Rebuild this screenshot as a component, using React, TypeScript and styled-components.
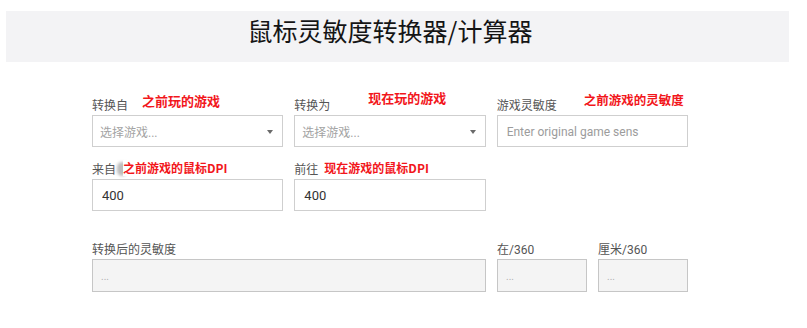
import React from 'react';
import styled, { createGlobalStyle } from 'styled-components';

const GlobalStyle = createGlobalStyle`
  html, body {
    margin: 0;
    padding: 0;
    background: #fff;
  }
  body {
    font-family: Roboto, "Noto Sans CJK SC", sans-serif;
    color: #333;
  }
  * {
    box-sizing: border-box;
  }
`;

const Page = styled.div`
  width: 807px;
  height: 328px;
  overflow: hidden;
`;

const Banner = styled.header`
  margin: 11px 18px 0 6px;
  height: 51px;
  background: #f3f3f5;
  padding: 4px 15px 0 0;
`;

const Title = styled.h1`
  margin: 0;
  font-family: "Noto Sans CJK SC", sans-serif;
  font-size: 25px;
  font-weight: 400;
  line-height: 30px;
  color: #151515;
  text-align: center;
`;

const Form = styled.form`
  margin: 35px 0 0 92px;
  width: 596px;
`;

const Grid = styled.div`
  display: grid;
  grid-template-columns: repeat(3, minmax(0, 1fr));
  column-gap: 11px;
  row-gap: 14px;
`;

const Results = styled.div`
  display: grid;
  grid-template-columns: 394px minmax(0, 1fr) minmax(0, 1fr);
  column-gap: 11px;
  margin-top: 30px;
`;

const Field = styled.div`
  position: relative;
`;

const Label = styled.label`
  display: block;
  height: 18px;
  font-family: Roboto, "Noto Sans CJK SC", sans-serif;
  font-size: 12px;
  line-height: 18px;
  color: #555;
`;

// red hand-written annotations laid over the labels
const Note = styled.span<{ $x: number; $y: number; $size?: number }>`
  position: absolute;
  left: ${(p) => p.$x}px;
  top: ${(p) => p.$y}px;
  padding-right: 2px;
  background: #fff;
  font-family: "Noto Sans CJK SC", sans-serif;
  font-size: ${(p) => p.$size ?? 13}px;
  font-weight: 700;
  line-height: 16px;
  color: #f2161b;
  white-space: nowrap;
`;

const Smudge = styled.span`
  position: absolute;
  left: 25px;
  top: 1px;
  width: 10px;
  height: 14px;
  border-radius: 7px;
  background: #bdbdbd;
  filter: blur(1.5px);
`;

const SelectBox = styled.div`
  display: flex;
  align-items: center;
  justify-content: space-between;
  height: 32px;
  padding: 0 9px 0 7px;
  border: 1px solid #cfcfcf;
  background: #fff;
  cursor: pointer;
`;

const Placeholder = styled.span`
  font-family: Roboto, "Noto Sans CJK SC", sans-serif;
  font-size: 12px;
  color: #a3a3a3;
`;

const Caret = styled.span`
  width: 0;
  height: 0;
  margin-top: 2px;
  border-left: 3px solid transparent;
  border-right: 3px solid transparent;
  border-top: 4px solid #6a6a6a;
`;

const Input = styled.input<{ $result?: boolean }>`
  display: block;
  width: 100%;
  height: ${(p) => (p.$result ? 33 : 32)}px;
  padding: 0 ${(p) => (p.$result ? 8 : 9)}px;
  border: ${(p) => (p.$result ? '1.5px solid #c6c6c6' : '1px solid #cfcfcf')};
  background: ${(p) => (p.$result ? '#f4f4f4' : '#fff')};
  font-family: Roboto, "Noto Sans CJK SC", sans-serif;
  font-size: 13px;
  color: #333;
  outline: none;

  &::placeholder {
    color: ${(p) => (p.$result ? '#b0b0b0' : '#9c9c9c')};
    font-size: ${(p) => (p.$result ? 10 : 12)}px;
  }
`;

const GameSelect: React.FC = () => (
  <SelectBox>
    <Placeholder>选择游戏...</Placeholder>
    <Caret />
  </SelectBox>
);

export default function App() {
  return (
    <Page>
      <GlobalStyle />
      <Banner>
        <Title>鼠标灵敏度转换器/计算器</Title>
      </Banner>

      <Form onSubmit={(e) => e.preventDefault()}>
        <Grid>
          <Field>
            <Label>转换自</Label>
            <Note $x={50} $y={-4}>之前玩的游戏</Note>
            <GameSelect />
          </Field>
          <Field>
            <Label>转换为</Label>
            <Note $x={74} $y={-7}>现在玩的游戏</Note>
            <GameSelect />
          </Field>
          <Field>
            <Label>游戏灵敏度</Label>
            <Note $x={87} $y={-5} $size={12.5}>之前游戏的灵敏度</Note>
            <Input placeholder="Enter original game sens" />
          </Field>

          <Field>
            <Label>来自</Label>
            <Smudge />
            <Note $x={31} $y={-1} $size={12}>之前游戏的鼠标DPI</Note>
            <Input defaultValue="400" />
          </Field>
          <Field>
            <Label>前往</Label>
            <Note $x={30} $y={-1} $size={12}>现在游戏的鼠标DPI</Note>
            <Input defaultValue="400" />
          </Field>
        </Grid>

        <Results>
          <Field>
            <Label>转换后的灵敏度</Label>
            <Input $result readOnly placeholder="..." />
          </Field>
          <Field>
            <Label>在/360</Label>
            <Input $result readOnly placeholder="..." />
          </Field>
          <Field>
            <Label>厘米/360</Label>
            <Input $result readOnly placeholder="..." />
          </Field>
        </Results>
      </Form>
    </Page>
  );
}
